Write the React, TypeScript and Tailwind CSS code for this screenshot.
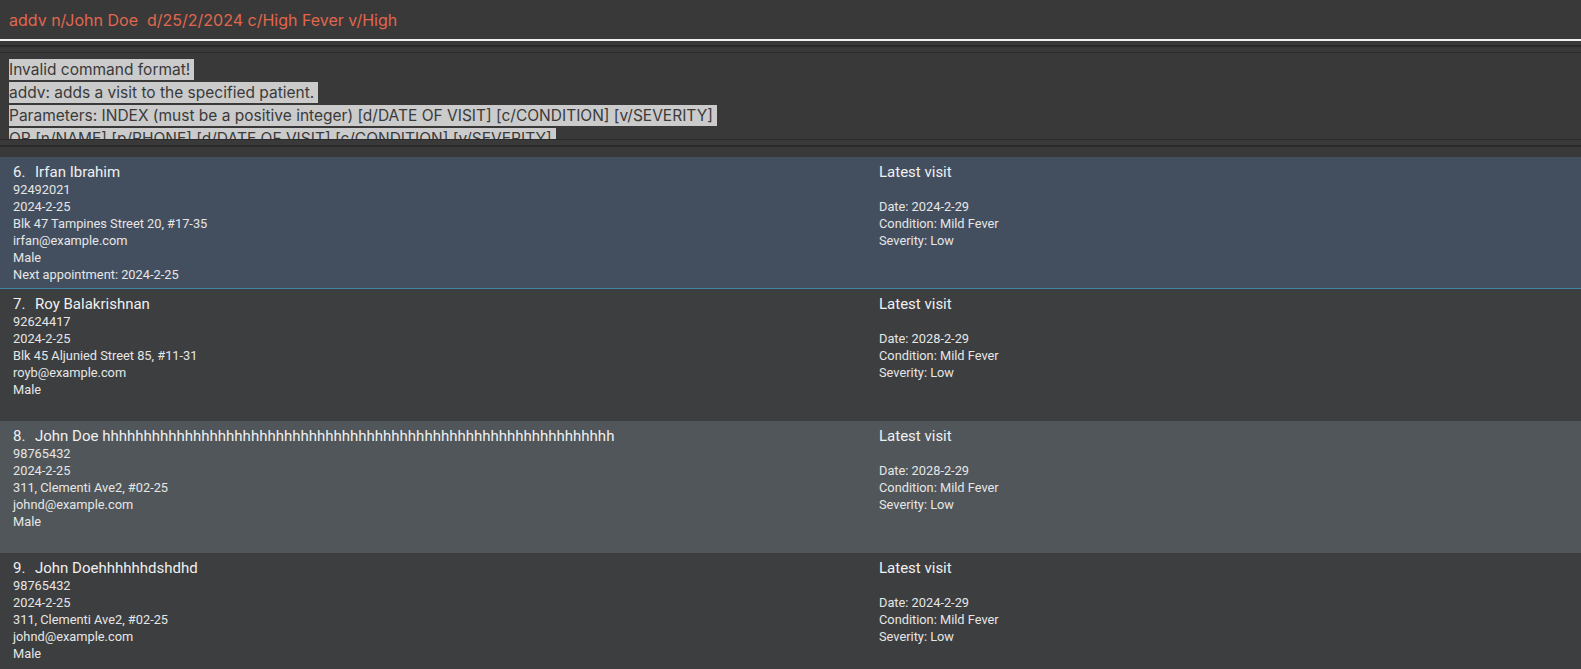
const font = { fontFamily: "Inter, 'Noto Sans', sans-serif" };
const cardFont = { fontFamily: "Roboto, 'Noto Sans', sans-serif" };

type Patient = {
  index: number;
  name: string;
  phone: string;
  dob: string;
  address: string;
  email: string;
  sex: string;
  appointment?: string;
  visitDate: string;
  condition: string;
  severity: string;
};

const patients: Patient[] = [
  {
    index: 6,
    name: "Irfan Ibrahim",
    phone: "92492021",
    dob: "2024-2-25",
    address: "Blk 47 Tampines Street 20, #17-35",
    email: "irfan@example.com",
    sex: "Male",
    appointment: "2024-2-25",
    visitDate: "2024-2-29",
    condition: "Mild Fever",
    severity: "Low",
  },
  {
    index: 7,
    name: "Roy Balakrishnan",
    phone: "92624417",
    dob: "2024-2-25",
    address: "Blk 45 Aljunied Street 85, #11-31",
    email: "royb@example.com",
    sex: "Male",
    visitDate: "2028-2-29",
    condition: "Mild Fever",
    severity: "Low",
  },
  {
    index: 8,
    name: "John Doe " + "h".repeat(62),
    phone: "98765432",
    dob: "2024-2-25",
    address: "311, Clementi Ave2, #02-25",
    email: "johnd@example.com",
    sex: "Male",
    visitDate: "2028-2-29",
    condition: "Mild Fever",
    severity: "Low",
  },
  {
    index: 9,
    name: "John Doehhhhhhdshdhd",
    phone: "98765432",
    dob: "2024-2-25",
    address: "311, Clementi Ave2, #02-25",
    email: "johnd@example.com",
    sex: "Male",
    visitDate: "2024-2-29",
    condition: "Mild Fever",
    severity: "Low",
  },
];

const resultLines = [
  "Invalid command format!",
  "addv: adds a visit to the specified patient.",
  "Parameters: INDEX (must be a positive integer) [d/DATE OF VISIT] [c/CONDITION] [v/SEVERITY]",
  "OR [n/NAME] [p/PHONE] [d/DATE OF VISIT] [c/CONDITION] [v/SEVERITY]",
];

function PatientCard({ p, bg, selected }: { p: Patient; bg: string; selected?: boolean }) {
  return (
    <div
      className={`${bg} h-[132px] shrink-0 grid grid-cols-[866px_1fr] pl-[13px] pt-[5px] ${
        selected ? "border-b border-[#3f86a6]" : ""
      }`}
      style={cardFont}
    >
      <div className="flex flex-col min-w-0">
        <div className="h-[20px] text-[15px] leading-[20px] text-[#f0f0f0] whitespace-nowrap flex">
          <span className="w-[22px] shrink-0">{p.index}.</span>
          <span>{p.name}</span>
        </div>
        <div className="text-[12.8px] leading-[17px] text-[#e6e6e6] mt-[-1px]">
          <div>{p.phone}</div>
          <div>{p.dob}</div>
          <div>{p.address}</div>
          <div>{p.email}</div>
          <div>{p.sex}</div>
          {p.appointment && <div>Next appointment: {p.appointment}</div>}
        </div>
      </div>
      <div className="flex flex-col">
        <div className="h-[20px] text-[15px] leading-[20px] text-[#f0f0f0]">Latest visit</div>
        <div className="text-[12.8px] leading-[17px] text-[#e6e6e6] mt-[-1px]">
          <div>&nbsp;</div>
          <div>Date: {p.visitDate}</div>
          <div>Condition: {p.condition}</div>
          <div>Severity: {p.severity}</div>
        </div>
      </div>
    </div>
  );
}

export default function App() {
  return (
    <div className="w-[1581px] h-[669px] overflow-hidden bg-[#393939] flex flex-col" style={font}>
      {/* command box */}
      <div className="h-[39px] shrink-0 px-[9px] flex items-center">
        <span className="text-[16px] text-[#e0674e] whitespace-pre">
          addv n/John Doe  d/25/2/2024 c/High Fever v/High
        </span>
      </div>
      <div className="h-[2px] shrink-0 bg-[#f2f2f2]" />
      <div className="h-[4px] shrink-0" />
      <div className="h-[2px] shrink-0 bg-[#2a2a2a]" />
      <div className="h-[5px] shrink-0" />
      <div className="h-[1px] shrink-0 bg-[#2c2c2c]" />

      {/* result box */}
      <div className="h-[86px] shrink-0 overflow-hidden px-[9px] pt-[5px]">
        {resultLines.map((l) => (
          <div key={l} className="leading-[22px]">
            <span className="bg-[#cbcbcb] text-[#3a3a3a] text-[15.5px] pr-[4px] py-[1px] whitespace-nowrap">
              {l}
            </span>
          </div>
        ))}
      </div>
      <div className="h-[1px] shrink-0 bg-[#2c2c2c]" />
      <div className="h-[5px] shrink-0" />
      <div className="h-[2px] shrink-0 bg-[#2a2a2a]" />
      <div className="h-[10px] shrink-0" />

      {/* patient list */}
      <div className="flex flex-col shrink-0">
        <PatientCard p={patients[0]} bg="bg-[#434f5f]" selected />
        <PatientCard p={patients[1]} bg="bg-[#3c3e40]" />
        <PatientCard p={patients[2]} bg="bg-[#50565a]" />
        <PatientCard p={patients[3]} bg="bg-[#3c3e40]" />
      </div>
    </div>
  );
}
